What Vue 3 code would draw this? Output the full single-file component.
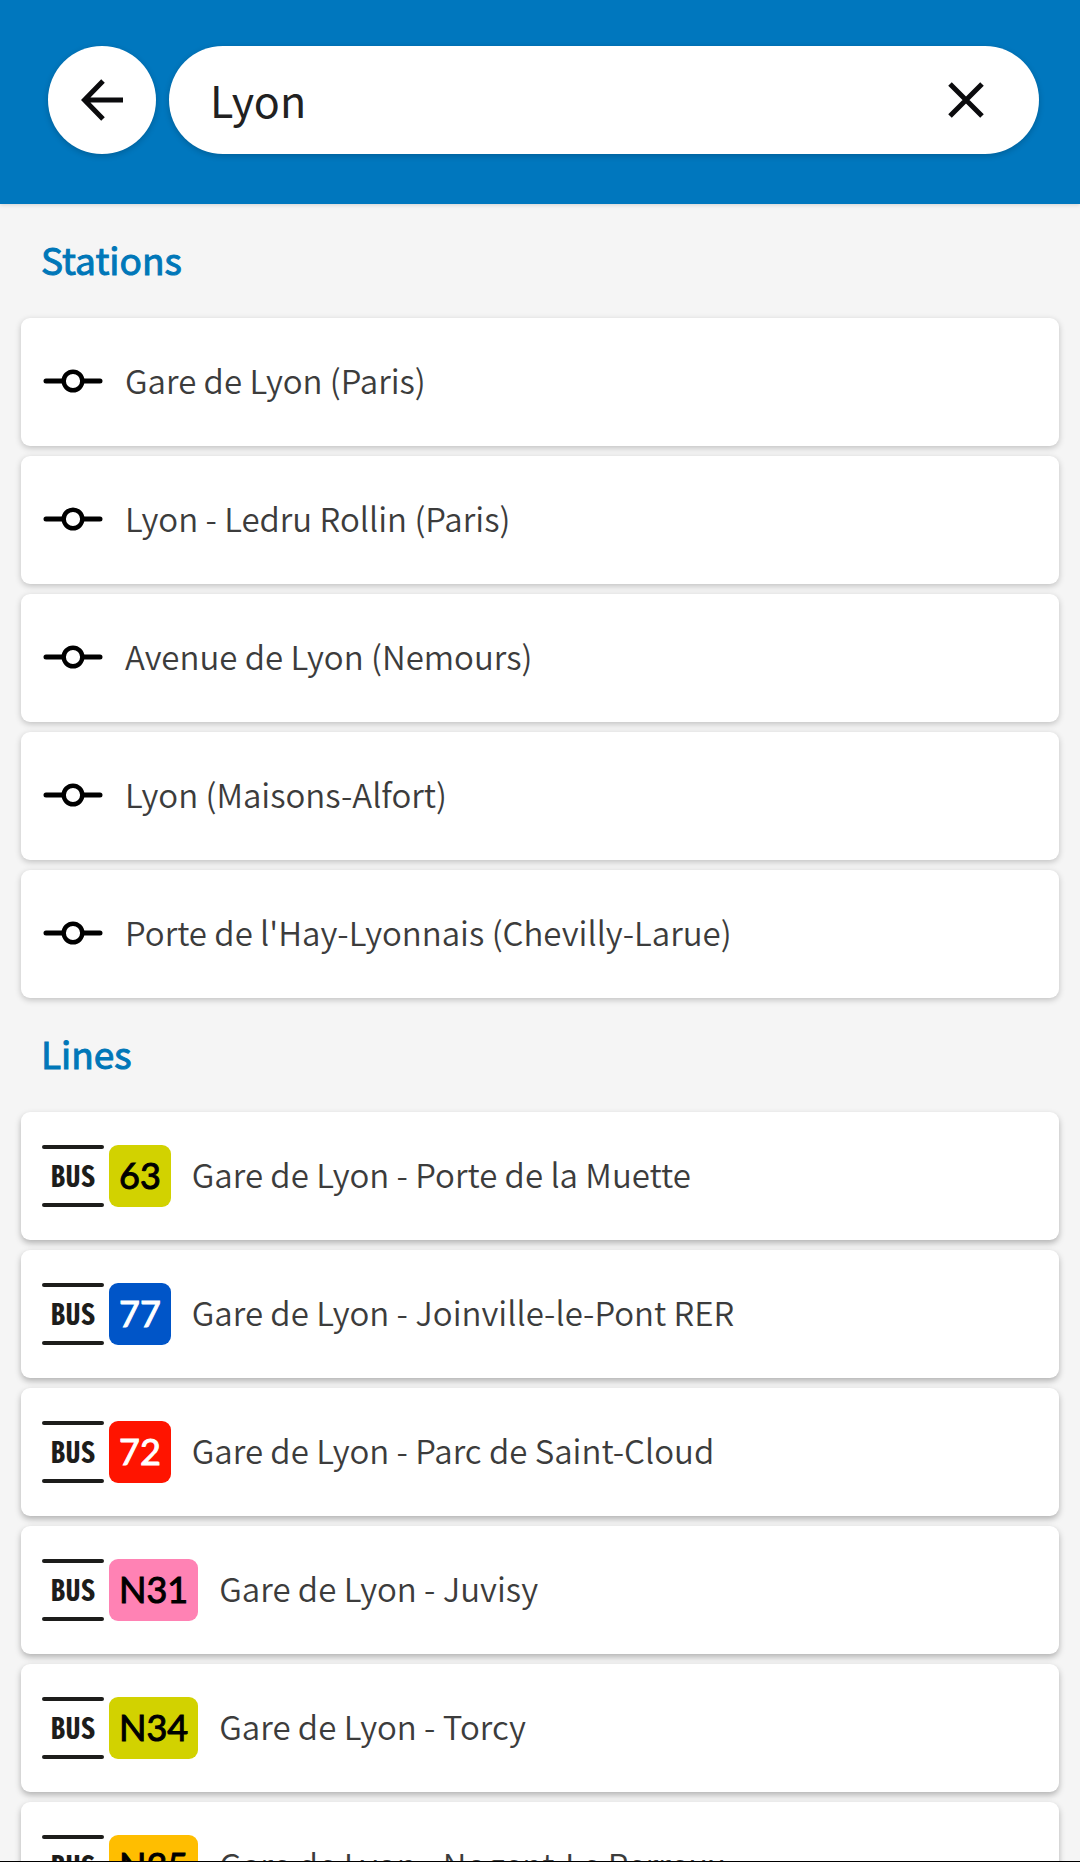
<script setup>
import { ref } from 'vue'

const query = ref('Lyon')

const stations = [
  'Gare de Lyon (Paris)',
  'Lyon - Ledru Rollin (Paris)',
  'Avenue de Lyon (Nemours)',
  'Lyon (Maisons-Alfort)',
  "Porte de l'Hay-Lyonnais (Chevilly-Larue)"
]

const lines = [
  { code: '63', label: 'Gare de Lyon - Porte de la Muette', tone: 'olive' },
  { code: '77', label: 'Gare de Lyon - Joinville-le-Pont RER', tone: 'blue' },
  { code: '72', label: 'Gare de Lyon - Parc de Saint-Cloud', tone: 'red' },
  { code: 'N31', label: 'Gare de Lyon - Juvisy', tone: 'pink' },
  { code: 'N34', label: 'Gare de Lyon - Torcy', tone: 'olive' },
  { code: 'N35', label: 'Gare de Lyon - Nogent-Le Perreux', tone: 'amber' }
]
</script>

<template>
  <div class="screen">
    <header class="topbar">
      <button class="back" type="button" aria-label="Back">
        <svg width="42" height="42" viewBox="0 0 42 42" fill="none" stroke="currentColor" stroke-width="5">
          <path d="M22 2 3.5 21 22 40M3.5 21H42" />
        </svg>
      </button>
      <div class="field">
        <input v-model="query" type="text" aria-label="Search" />
        <button class="clear" type="button" aria-label="Clear" @click="query = ''">
          <svg width="36" height="36" viewBox="0 0 36 36" fill="none" stroke="currentColor" stroke-width="5">
            <path d="M2 2 34 34M34 2 2 34" />
          </svg>
        </button>
      </div>
    </header>

    <main class="results">
      <section>
        <h2>Stations</h2>
        <ul>
          <li v-for="station in stations" :key="station">
            <a class="card" href="#">
              <svg class="stop" width="62" height="28" viewBox="0 0 62 28" fill="none" stroke="#000" aria-hidden="true">
                <path d="M4 13H21M41 13H58" stroke-width="5" stroke-linecap="round" />
                <circle cx="31" cy="13" r="9.3" stroke-width="4.4" />
              </svg>
              <span class="label">{{ station }}</span>
            </a>
          </li>
        </ul>
      </section>

      <section>
        <h2>Lines</h2>
        <ul>
          <li v-for="line in lines" :key="line.code">
            <a class="card raised" href="#">
              <span class="line">
                <span class="mode">BUS</span>
                <span class="code" :class="line.tone">{{ line.code }}</span>
              </span>
              <span class="label">{{ line.label }}</span>
            </a>
          </li>
        </ul>
      </section>
    </main>
  </div>
</template>

<style>
body {
  margin: 0;
  background: #f5f5f5;
}
</style>

<style scoped>
* {
  box-sizing: border-box;
}

.screen {
  display: flex;
  flex-direction: column;
  height: 100vh;
  border-bottom: 1px solid #000;
  background: #f5f5f5;
  font-family: "Noto Sans CJK SC", "Noto Sans", sans-serif;
}

.topbar {
  display: flex;
  flex: none;
  align-items: center;
  gap: 13px;
  padding: 46px 41px 50px 48px;
  background: #0077be;
  box-shadow: 0 1px 4px rgba(0, 0, 0, 0.14);
}

button {
  display: flex;
  align-items: center;
  justify-content: center;
  padding: 0;
  border: 0;
  background: none;
  color: #0b0b0d;
}

.back {
  flex: none;
  width: 108px;
  height: 108px;
  border-radius: 50%;
  background: #fff;
  box-shadow: 0 2px 6px rgba(0, 0, 0, 0.2);
}

.field {
  display: flex;
  flex: 1;
  align-items: center;
  min-width: 0;
  height: 108px;
  padding: 0 45px 0 41px;
  border-radius: 54px;
  background: #fff;
  box-shadow: 0 2px 6px rgba(0, 0, 0, 0.2);
}

input {
  flex: 1;
  min-width: 0;
  padding: 0 0 2px;
  border: 0;
  outline: 0;
  background: none;
  color: #212121;
  font: 43px/68px "Noto Sans CJK SC", "Noto Sans", sans-serif;
}

.clear {
  width: 56px;
  height: 56px;
}

.results {
  flex: 1;
  min-height: 0;
  padding: 0 21px;
  overflow-y: auto;
  scrollbar-width: none;
}

h2 {
  margin: 0;
  padding: 27px 20px 31px;
  color: #0077b8;
  font-size: 37px;
  font-weight: 400;
  line-height: 56px;
  -webkit-text-stroke: 1px currentColor;
}

ul {
  display: flex;
  flex-direction: column;
  gap: 10px;
  margin: 0;
  padding: 0;
  list-style: none;
}

.card {
  display: flex;
  align-items: center;
  gap: 21px;
  height: 128px;
  padding: 0 21px;
  border-radius: 9px;
  background: #fff;
  box-shadow: 0 2px 6px rgba(0, 0, 0, 0.22);
  color: #3c3c3c;
  text-decoration: none;
}

.raised {
  box-shadow: 0 3px 6px rgba(0, 0, 0, 0.28);
}

.stop {
  flex: none;
}

.label {
  padding-bottom: 4px;
  font-size: 33px;
  font-weight: 350;
  line-height: 50px;
  white-space: nowrap;
}

.line {
  display: flex;
  flex: none;
  gap: 5px;
}

.mode {
  position: relative;
  width: 62px;
  height: 62px;
  color: #1d1d1b;
  font: bold 30px/58px "Noto Sans Mono CJK SC", "Liberation Mono", monospace;
  text-align: center;
}

.mode::before,
.mode::after {
  content: "";
  position: absolute;
  left: 0;
  right: 0;
  height: 4px;
  border-radius: 2px;
  background: #1d1d1b;
}

.mode::before {
  top: 0;
}

.mode::after {
  bottom: 0;
}

.code {
  height: 62px;
  padding: 0 10px;
  border-radius: 9px;
  color: #000;
  font: 400 36px/60px Lato, sans-serif;
  -webkit-text-stroke: 1px currentColor;
}

.olive {
  background: #d2d200;
}

.blue {
  background: #0055c8;
  color: #fff;
}

.red {
  background: #ff1400;
  color: #fff;
}

.pink {
  background: #ff82b4;
}

.amber {
  background: #ffbe00;
}
</style>
